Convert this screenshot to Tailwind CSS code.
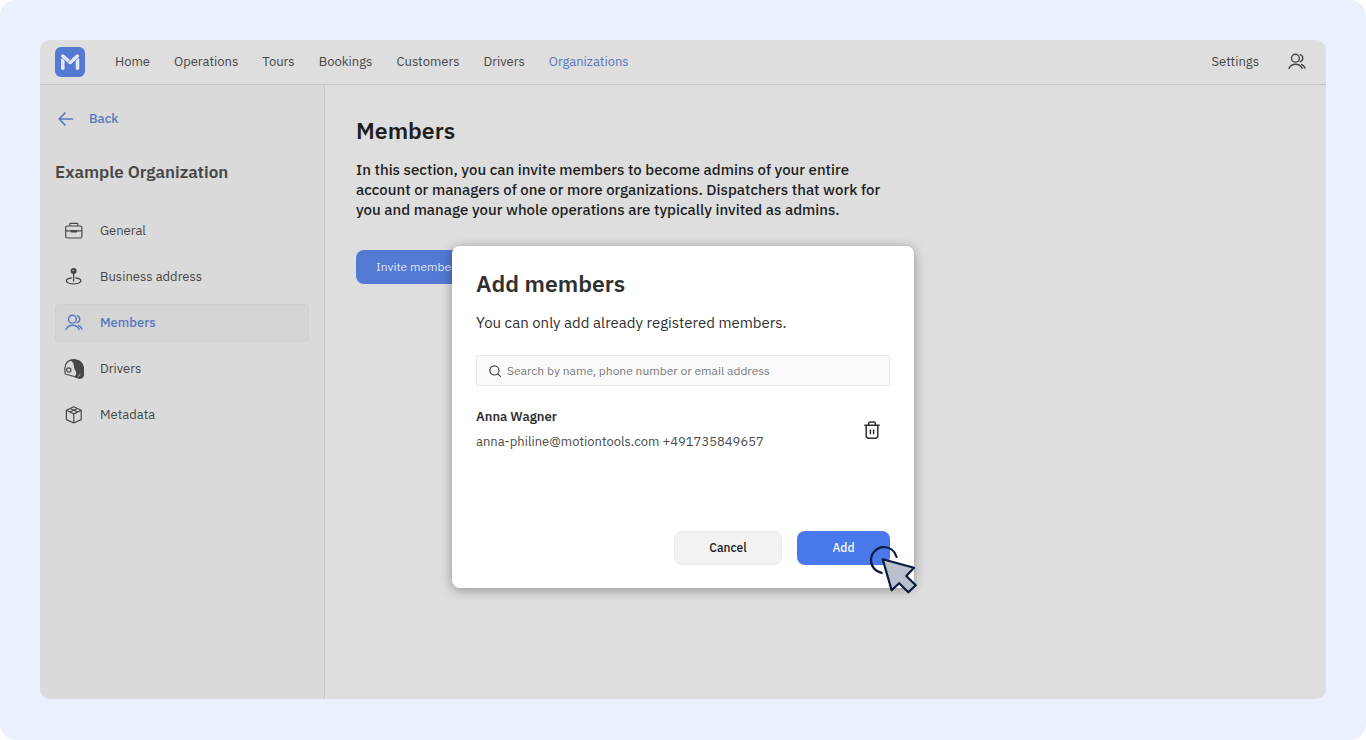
<!DOCTYPE html>
<html lang="en">
<head>
    <meta charset="UTF-8" />
    <meta name="viewport" content="width=device-width, initial-scale=1.0" />
    <title>Members - Example Organization</title>
    <script src="https://cdn.jsdelivr.net/npm/@tailwindcss/browser@4"></script>
</head>
<body class="bg-white font-['IBM_Plex_Sans','Roboto',sans-serif] text-[13px] text-[#474747]">

    <div class="relative flex min-h-screen flex-col rounded-2xl bg-[#ebf0fe] px-10 pt-10 pb-[41px]">

        <!-- App window -->
        <div class="flex grow flex-col overflow-hidden rounded-[10px] bg-[#dedede]">

            <!-- Top navigation -->
            <header class="flex h-[45px] items-center justify-between border-b border-[#c6c6c6] pr-5 pl-[15px]">
                <div class="flex items-center">
                    <a href="#" aria-label="Dashboard" class="mr-[30px]">
                        <svg class="size-[30px]" viewBox="0 0 30 30" fill="none">
                            <rect width="30" height="30" rx="6" fill="#5479d3" />
                            <g stroke="#dfe5f3" stroke-width="3.6" stroke-linecap="round">
                                <path d="M7.8 21.2V12.5" />
                                <path d="M22.5 21.2V12.5" />
                                <path d="M7.8 9.2L14.8 15.2" />
                                <path d="M22.4 9.2L15.2 15.4" />
                            </g>
                            <path d="M12.2 15.9L17 11.5" stroke="#5479d3" stroke-width="0.7" />
                            <path d="M6 10.2L11.4 14.9M24.4 10.2L19 14.9" stroke="#5479d3" stroke-width="0.7" />
                        </svg>
                    </a>
                    <nav class="flex gap-6">
                        <a href="#">Home</a>
                        <a href="#">Operations</a>
                        <a href="#">Tours</a>
                        <a href="#">Bookings</a>
                        <a href="#">Customers</a>
                        <a href="#">Drivers</a>
                        <a href="#" class="text-[#5877bd]">Organizations</a>
                    </nav>
                </div>
                <div class="flex items-center gap-[29px]">
                    <a href="#">Settings</a>
                    <button type="button" aria-label="Account">
                        <svg class="size-[18px]" viewBox="0 0 18 18" fill="none" stroke="#474747" stroke-width="1.4" stroke-linecap="round">
                            <circle cx="7.4" cy="5.2" r="3.9" />
                            <path d="M1 15.4C2.4 12.7 4.7 11.3 7.6 11.3s5.2 1.4 6.6 4.1" />
                            <path d="M12.2 1.7c3.4 1.3 3.4 5.7 0 7" />
                            <path d="M13.6 11.5c1.6.7 2.7 1.9 3.5 3.6" />
                        </svg>
                    </button>
                </div>
            </header>

            <div class="flex grow">

                <!-- Sidebar -->
                <aside class="w-[285px] shrink-0 border-r border-[#c8c8c8] bg-[#dadada] px-[15px] pt-6">
                    <a href="#" class="flex h-5 items-center gap-[15px] pl-[3px] font-medium text-[#5877bd]">
                        <svg class="size-4" viewBox="0 0 16 16" fill="none" stroke="currentColor" stroke-width="1.7" stroke-linecap="round" stroke-linejoin="round">
                            <path d="M14.5 8H1.5M7 2L1.2 8L7 14" />
                        </svg>
                        Back
                    </a>
                    <h2 class="mt-[31px] text-[17px] leading-6 font-semibold">Example Organization</h2>

                    <ul class="mt-7 flex flex-col gap-2">
                        <li>
                            <a href="#" class="flex h-[38px] items-center gap-4 px-[9px]">
                                <svg class="size-5" viewBox="0 0 20 20" fill="none" stroke="currentColor" stroke-width="1.2" stroke-linejoin="round">
                                    <rect x="1.7" y="5" width="16.2" height="12" rx="1.5" />
                                    <path d="M5.8 5V3.2Q5.8 2.4 6.6 2.4H13Q13.8 2.4 13.8 3.2V5M1.7 9.8H17.9" />
                                    <path d="M7.2 9.8H12.6V10.8H7.2Z" fill="currentColor" />
                                </svg>
                                General
                            </a>
                        </li>
                        <li>
                            <a href="#" class="flex h-[38px] items-center gap-4 px-[9px]">
                                <svg class="size-5" viewBox="0 0 20 20" fill="none" stroke="currentColor" stroke-width="1.3" stroke-linecap="round">
                                    <circle cx="9.6" cy="4" r="2.4" fill="currentColor" />
                                    <circle cx="9.1" cy="3.4" r="0.7" fill="#dadada" stroke="none" />
                                    <path d="M9.6 6.5V14" />
                                    <path d="M7.2 11C4.4 11.3 2.3 12.3 2.3 13.8c0 1.7 3.2 3.1 7.3 3.1s7.3-1.4 7.3-3.1c0-1.5-2.1-2.5-4.9-2.8" />
                                </svg>
                                Business address
                            </a>
                        </li>
                        <li>
                            <a href="#" aria-current="page" class="flex h-[38px] items-center gap-4 rounded border border-[#cfcfcf] bg-[#d4d4d4] px-2 font-medium text-[#5877bd]">
                                <svg class="size-5" viewBox="0 0 20 20" fill="none" stroke="currentColor" stroke-width="1.4" stroke-linecap="round">
                                    <circle cx="8.4" cy="6.2" r="3.9" />
                                    <path d="M2 16.4C3.4 13.7 5.7 12.3 8.6 12.3s5.2 1.4 6.6 4.1" />
                                    <path d="M13.2 2.7c3.4 1.3 3.4 5.7 0 7" />
                                    <path d="M14.6 12.5c1.6.7 2.7 1.9 3.5 3.6" />
                                </svg>
                                Members
                            </a>
                        </li>
                        <li>
                            <a href="#" class="flex h-[38px] items-center gap-4 px-[9px]">
                                <svg class="size-5" viewBox="0 0 20 20" fill="none" stroke="currentColor" stroke-width="1.2" stroke-linejoin="round">
                                    <path d="M1.2 15L.8 9.5C1.2 4 4.6.8 9.5.8 15.5.8 19.3 4.6 19.3 10.5V15.5Q19.2 19 15.2 19.2L12 18Z" />
                                    <path d="M7.5 1C10.5 3 10.2 6.5 11 9.5C11.8 12.3 13.4 12.8 12.8 15L11.4 17.7L15.2 19.2Q19.2 19 19.3 15.5V10.5C19.3 4.6 15.5.8 9.5.8Z" fill="currentColor" />
                                    <circle cx="4.8" cy="11" r="2.1" />
                                    <path d="M14.3 18.2L16.2 14.8" stroke="#dadada" stroke-width="0.7" />
                                </svg>
                                Drivers
                            </a>
                        </li>
                        <li>
                            <a href="#" class="flex h-[38px] items-center gap-4 px-[9px]">
                                <svg class="size-5" viewBox="0 0 20 20" fill="none" stroke="currentColor" stroke-width="1.2" stroke-linejoin="round">
                                    <path d="M9.8 1.8L17.2 5.3V14.6L9.8 18L2.4 14.6V5.3Z" />
                                    <path d="M2.4 5.3L9.8 8.9L17.2 5.3M9.8 8.9V18" />
                                    <path d="M6 7L13.4 3.5M13.6 7L6.2 3.5" />
                                </svg>
                                Metadata
                            </a>
                        </li>
                    </ul>
                </aside>

                <!-- Page content -->
                <main class="grow px-[31px] pt-[29px] text-[#1f1f1f]">
                    <h1 class="text-[23px] leading-8 font-semibold">Members</h1>
                    <p class="mt-[14px] max-w-[550px] text-[15px] leading-5 font-medium">
                        In this section, you can invite members to become admins of your entire account or managers of one or more organizations. Dispatchers that work for you and manage your whole operations are typically invited as admins.
                    </p>
                    <button type="button" class="mt-[30px] h-[34px] rounded-lg bg-[#5479d3] px-5 text-xs text-[#dfe5f3]">Invite members</button>
                </main>
            </div>
        </div>

        <!-- Add members dialog -->
        <div class="absolute inset-x-0 top-[246px] flex justify-center">
            <div role="dialog" aria-labelledby="dialogTitle" class="relative w-[462px] rounded-lg bg-white px-6 pt-[21px] pb-[23px] text-[#303030] shadow-[0_2px_12px_rgba(0,0,0,0.35)]">
                <h2 id="dialogTitle" class="text-[23px] leading-8 font-semibold">Add members</h2>
                <p class="mt-[14px] text-[15px] leading-5">You can only add already registered members.</p>

                <label class="mt-[22px] flex h-[31px] items-center gap-1.5 rounded-xs border border-[#e6e6e6] bg-[#fafafa] px-3">
                    <svg class="size-3" viewBox="0 0 12 12" fill="none" stroke="#444" stroke-width="1.2" stroke-linecap="round">
                        <circle cx="5.4" cy="5.4" r="4.6" />
                        <path d="M8.8 8.8L11.4 11.4" />
                    </svg>
                    <input type="text" aria-label="Search members" placeholder="Search by name, phone number or email address" class="grow bg-transparent text-xs outline-none placeholder:text-[#747a7c]" />
                </label>

                <div class="mt-[21px] flex items-center justify-between pr-2.5">
                    <div>
                        <p class="leading-5 font-semibold">Anna Wagner</p>
                        <p class="mt-[5px] leading-5 text-[#4a4a4a]">anna-philine@motiontools.com +491735849657</p>
                    </div>
                    <button type="button" aria-label="Remove Anna Wagner">
                        <svg class="h-[18px] w-4" viewBox="0 0 16 18" fill="none" stroke="#303030" stroke-width="1.5" stroke-linecap="round" stroke-linejoin="round">
                            <path d="M.8 4.2H15.2M4.6 4V2.8Q4.6 1 6.4 1H9.6Q11.4 1 11.4 2.8V4" />
                            <path d="M2.2 4.4V14.8Q2.2 17.2 4.6 17.2H11.4Q13.8 17.2 13.8 14.8V4.4" />
                            <path d="M6.4 9V12.8M9.6 9V12.8" />
                        </svg>
                    </button>
                </div>

                <div class="mt-[79px] flex justify-end gap-[15px] text-xs font-medium">
                    <button type="button" class="h-[34px] w-[108px] rounded-lg border border-[#e9e9e9] bg-[#f2f2f2] text-[#1a1a1a]">Cancel</button>
                    <button type="button" class="h-[34px] w-[93px] rounded-lg bg-[#4878ea] text-[#f3f6fe]">Add</button>
                </div>

                <!-- Click pointer -->
                <svg class="absolute -right-1 -bottom-1.5 h-12 w-[50px]" viewBox="0 0 50 48" fill="none" stroke="#0b1b3f" stroke-width="2.2" stroke-linecap="round" stroke-linejoin="round">
                    <path d="M28.6 11C26.8 4.5 21.5 1 15.5 1.2C8.5 1.5 3 7.2 3 14.2C3 20.5 7.5 25.8 13.7 26.8" />
                    <path d="M14.7 13.2L46 21.8L38.3 30L47.8 39.2L40.3 46.3L31.2 37.2L23.6 44.3Z" fill="#b9bfcb" />
                </svg>
            </div>
        </div>
    </div>

</body>
</html>
